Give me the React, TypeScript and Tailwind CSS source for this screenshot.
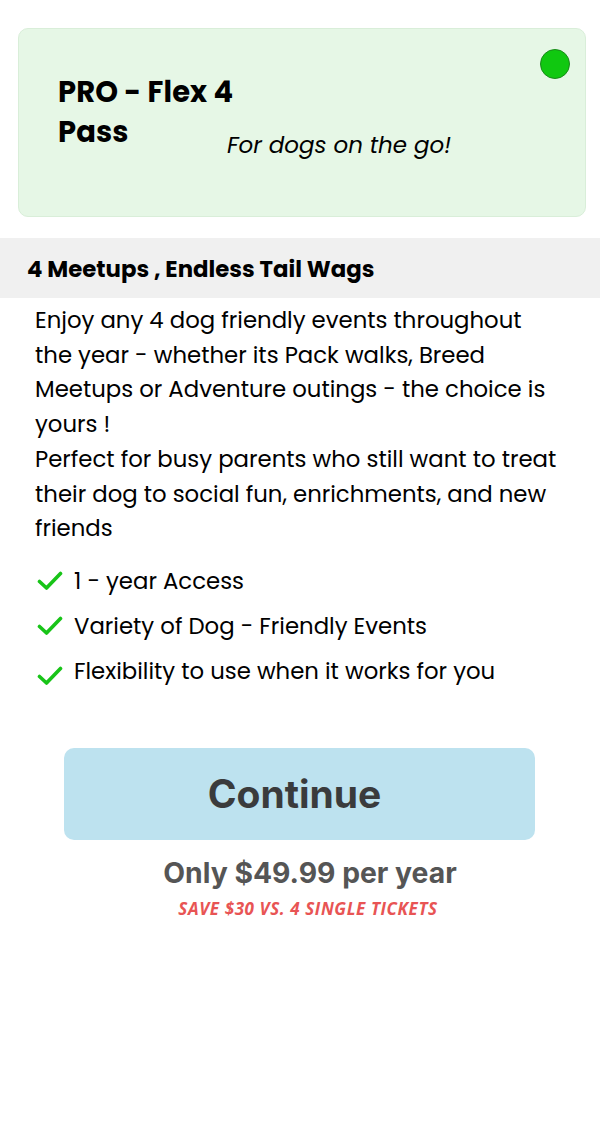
import React from "react";

const Check = () => (
  <svg width="26" height="20" viewBox="0 0 26 20" className="shrink-0">
    <path d="M2.5 10.5 L9.5 17 L23.5 2.5" fill="none" stroke="#18c418" strokeWidth="3.6" strokeLinecap="round" strokeLinejoin="round" />
  </svg>
);

export default function App() {
  const body = { fontFamily: "Poppins, Inter, 'Noto Sans', sans-serif" };
  return (
    <div className="w-[600px] h-[1128px] bg-white" style={body}>
      <div className="pt-[28px] pl-[18px] pr-[14px]">
        <div className="relative h-[189px] rounded-[10px] bg-[#e6f7e6] border border-[#d9eed9] flex items-start pl-[39px] pt-[43px]">
          <div className="w-[190px] text-[29px] leading-[40px] font-bold text-black tracking-[0.1px]">
            PRO - Flex 4 Pass
          </div>
          <div className="mt-[58px] ml-[-21px] italic text-[23px] leading-[30px] text-black">
            For dogs on the go!
          </div>
          <div className="absolute top-[20px] right-[15px] w-[30px] h-[30px] rounded-full bg-[#10c810] border border-[#1a8a1a]" />
        </div>
      </div>
      <div className="mt-[21px] h-[60px] bg-[#f0f0f0] flex items-center pl-[27px] pt-[3px] text-[22.8px] font-bold text-black">
        4 Meetups , Endless Tail Wags
      </div>
      <div className="pl-[35px] mt-[5px] text-[22.8px] leading-[34.7px] text-black whitespace-nowrap">
        <div>Enjoy any 4 dog friendly events throughout</div>
        <div>the year - whether its Pack walks, Breed</div>
        <div>Meetups or Adventure outings - the choice is</div>
        <div>yours !</div>
        <div>Perfect for busy parents who still want to treat</div>
        <div>their dog to social fun, enrichments, and new</div>
        <div>friends</div>
      </div>
      <div className="pl-[37px] mt-[20px] flex flex-col gap-[15px] text-[22.8px] leading-[30px] text-black">
        <div className="flex items-center gap-[11px]"><Check /><span>1 - year Access</span></div>
        <div className="flex items-center gap-[11px]"><Check /><span>Variety of Dog - Friendly Events</span></div>
        <div className="flex items-center gap-[11px]"><span className="mt-[10px]"><Check /></span><span>Flexibility to use when it works for you</span></div>
      </div>
      <div className="mt-[62px] flex justify-center">
        <div className="w-[471px] h-[92px] ml-[-1px] pr-[10px] rounded-[10px] bg-[#bde2ef] flex items-center justify-center text-[39px] font-bold text-[#3a3b3c]" style={{ fontFamily: "Inter, 'Open Sans', sans-serif" }}>
          Continue
        </div>
      </div>
      <div className="mt-[15px] pl-[20px] text-center text-[28.3px] leading-[36px] font-bold text-[#555555]" style={{ fontFamily: "Inter, 'Open Sans', sans-serif" }}>
        Only $49.99 per year
      </div>
      <div className="mt-[7px] pl-[16px] text-center text-[17px] leading-[22px] font-bold italic tracking-[0.6px] text-[#e85454]" style={{ fontFamily: "'Open Sans', sans-serif" }}>
        SAVE $30 VS. 4 SINGLE TICKETS
      </div>
    </div>
  );
}
